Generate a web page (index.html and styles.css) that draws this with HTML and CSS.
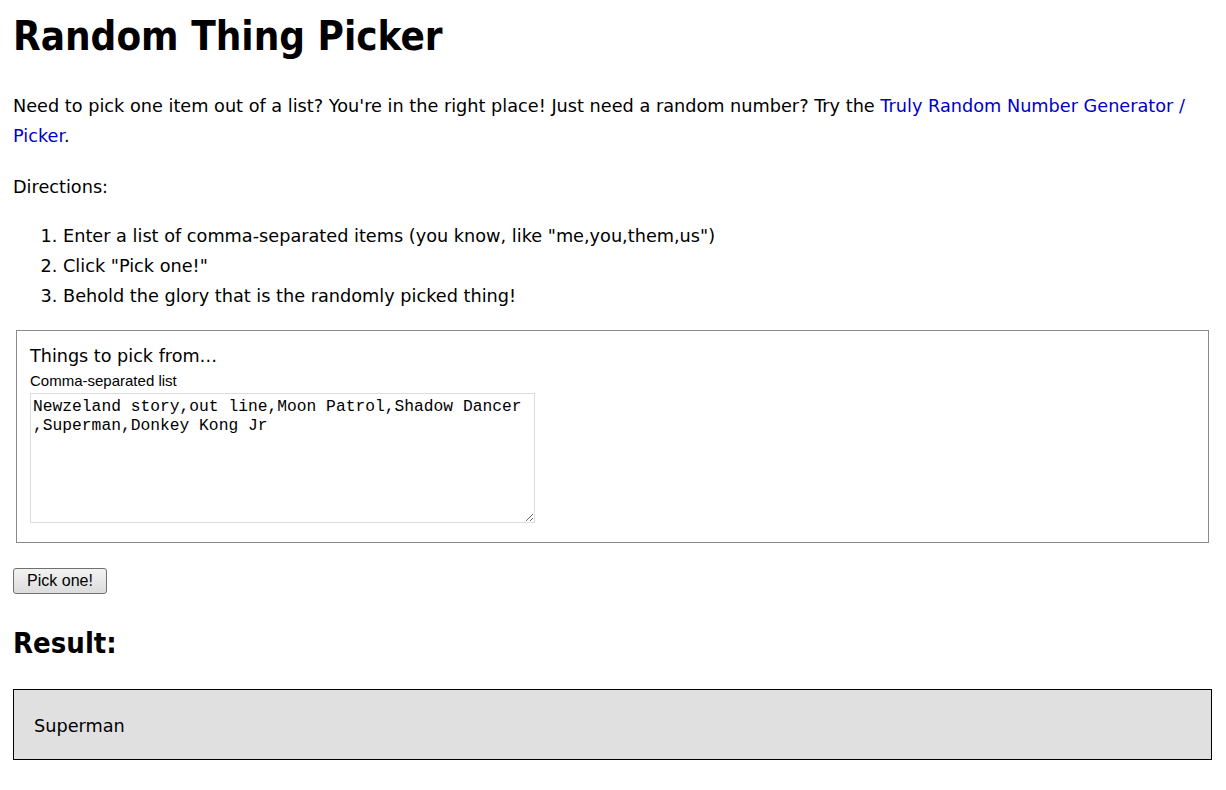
FILE: index.html
```html
<!DOCTYPE html>
<html lang="en">
<head>
  <meta charset="UTF-8">
  <title>Random Thing Picker</title>
  <link rel="stylesheet" href="styles.css">
</head>
<body>
  <h1>Random Thing Picker</h1>
  <p>Need to pick one item out of a list? You're in the right place! Just need a random number? Try the <a href="#">Truly Random Number Generator / Picker</a>.</p>
  <p>Directions:</p>
  <ol>
    <li>Enter a list of comma-separated items (you know, like "me,you,them,us")</li>
    <li>Click "Pick one!"</li>
    <li>Behold the glory that is the randomly picked thing!</li>
  </ol>

  <fieldset class="picker-box">
    <div class="picker-title">Things to pick from…</div>
    <label class="picker-label" for="things">Comma-separated list</label>
    <textarea id="things" spellcheck="false">Newzeland story,out line,Moon Patrol,Shadow Dancer
,Superman,Donkey Kong Jr</textarea>
  </fieldset>

  <button class="pick-btn" id="pickBtn">Pick one!</button>

  <h2>Result:</h2>
  <div class="result" id="result">Superman</div>
</body>
</html>
```

FILE: styles.css
```css
html, body {
  margin: 0;
  padding: 0;
}
body {
  margin: 0 14px 0 13px;
  font-family: "DejaVu Sans", Verdana, sans-serif;
  font-size: 17.7px;
  line-height: 30px;
  color: #000;
}
h1 {
  font-family: "DejaVu Sans Condensed", "DejaVu Sans", sans-serif;
  font-size: 40px;
  line-height: 48px;
  margin: 12px 0 31px 0;
}
p {
  margin: 21px 0 19px 0;
}
a {
  color: #0000cc;
  text-decoration: none;
}
ol {
  margin: 19px 0;
  padding-left: 50px;
}
.picker-box {
  margin: 19px 3px 0 3px;
  padding: 12px 13px 19px 13px;
  border: 1px solid #8a8a8a;
}
.picker-title {
  font-size: 17.6px;
  line-height: 26px;
}
.picker-label {
  display: block;
  font-family: "Liberation Sans", Arial, sans-serif;
  font-size: 15px;
  line-height: 20px;
  margin-top: 2px;
  margin-bottom: 2px;
}
.picker-box textarea {
  display: block;
  width: 505px;
  height: 130px;
  box-sizing: border-box;
  border: 1px solid #dcdcdc;
  padding: 3px 2px;
  margin: 0;
  font-family: "Liberation Mono", "Courier New", monospace;
  font-size: 16.3px;
  line-height: 19px;
  resize: both;
}
.pick-btn {
  display: block;
  margin-top: 25px;
  width: 94px;
  height: 26px;
  padding: 0;
  font-family: "Liberation Sans", Arial, sans-serif;
  font-size: 16px;
  color: #000;
  background: linear-gradient(#f2f2f2, #dcdcdc);
  border: 1px solid #707070;
  border-radius: 3px;
  cursor: pointer;
}
h2 {
  font-family: "DejaVu Sans Condensed", "DejaVu Sans", sans-serif;
  font-size: 29px;
  line-height: 36px;
  margin: 31px 0 28px 0;
}
.result {
  background: #e0e0e0;
  border: 1px solid #000;
  padding: 21px 20px 18px 20px;
  line-height: 30px;
}
```
